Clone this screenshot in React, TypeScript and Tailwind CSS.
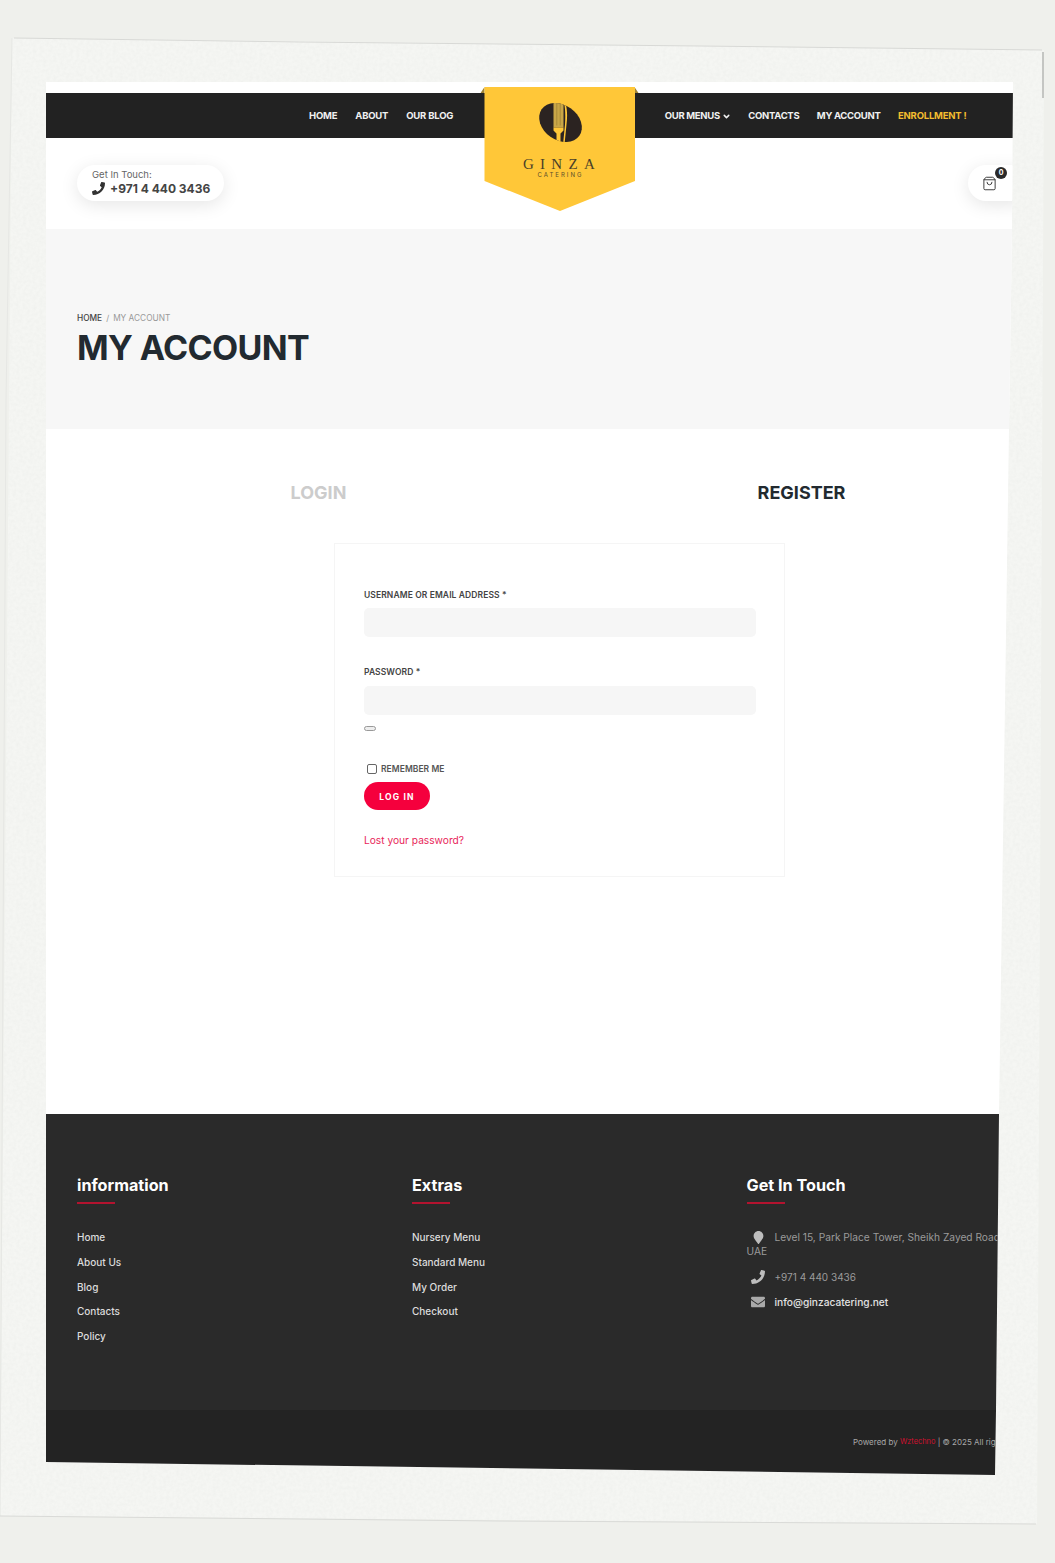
import { ChevronDown, ShoppingBag } from "lucide-react";
import { FaEnvelope, FaMapMarker, FaPhone } from "react-icons/fa";

const leftNav = ["HOME", "ABOUT", "OUR BLOG"];
const infoLinks = ["Home", "About Us", "Blog", "Contacts", "Policy"];
const extraLinks = ["Nursery Menu", "Standard Menu", "My Order", "Checkout"];

function Paper() {
  return (
    <svg className="absolute inset-0" width="1055" height="1563" aria-hidden="true">
      <defs>
        <filter id="grain" x="0" y="0" width="100%" height="100%">
          <feTurbulence type="fractalNoise" baseFrequency="0.3" numOctaves="3" seed="4" />
          <feColorMatrix values="0 0 0 0 0.6  0 0 0 0 0.62  0 0 0 0 0.6  0 0 0 0.2 -0.06" />
        </filter>
        <clipPath id="sheet">
          <path d="M12 38 L1044 50 L1037 1524 L0 1516 Z" />
        </clipPath>
      </defs>
      <path d="M12 38 L1044 50 L1037 1524 L0 1516 Z" fill="#f5f6f3" />
      <rect width="1055" height="1563" filter="url(#grain)" clipPath="url(#sheet)" />
      <path d="M14 38 L300 42 L700 46 L1042 50" fill="none" stroke="#d8d9d6" strokeWidth="1" />
      <path d="M12 38 L6 400 L0 1516" fill="none" stroke="#e6e7e4" strokeWidth="1" />
      <path d="M0 1516 L500 1521 L1036 1524" fill="none" stroke="#d9dad7" strokeWidth="1" />
      <path d="M1043 52 L1043 98" fill="none" stroke="#b5b6b3" strokeWidth="1.5" />
    </svg>
  );
}

function LogoBanner() {
  return (
    <div className="absolute left-1/2 top-[5px] h-[124px] w-[159px] -translate-x-1/2">
      <svg className="absolute inset-0" width="159" height="124" viewBox="0 0 159 124">
        <defs>
          <clipPath id="bean">
            <ellipse cx="0" cy="0" rx="23" ry="17.5" transform="rotate(35)" />
          </clipPath>
        </defs>
        <path d="M0 6 L4 0 L4 6 Z M158 6 L154 0 L154 6 Z" fill="#a08437" />
        <path d="M4 0 H154.5 V94 L79.5 124 L4 94 Z" fill="#ffc738" />
        <g transform="translate(80 35.5)">
          <ellipse cx="0" cy="0" rx="23" ry="17.5" transform="rotate(35)" fill="#2b2321" />
          <g clipPath="url(#bean)">
            {/* fork: gold band with faint tines, then the stem */}
            <rect x="-7" y="-22" width="10" height="27" fill="#c9a647" />
            <rect x="-4.2" y="-22" width="1" height="25" fill="#a88a3a" />
            <rect x="-0.8" y="-22" width="1" height="25" fill="#a88a3a" />
            <path d="M-7 5 H3 V8 L0 11 V22 H-4 V11 L-7 8 Z" fill="#ffc738" />
            {/* knife edge */}
            <path d="M4 -22 C7 -15 7 -6 6 2 L4 22 H2.5 L4.5 2 C5 -6 5 -15 3 -22 Z" fill="#ffc738" />
          </g>
        </g>
      </svg>
      <div className="absolute inset-x-0 top-[69px] pl-[5px] text-center font-['Liberation_Serif',serif] text-[15px] leading-[16px] tracking-[0.42em] text-[#4a3f28]">
        GINZA
      </div>
      <div className="absolute inset-x-0 top-[84px] pl-[2px] text-center font-['Inter',sans-serif] text-[6px] leading-[7px] tracking-[0.34em] text-[#5c4e2c]">
        CATERING
      </div>
    </div>
  );
}

function FooterHeading({ title }: { title: string }) {
  return (
    <div>
      <h3 className="text-[16.2px] font-bold leading-[22px] text-white">{title}</h3>
      <div className="mt-[6px] h-[2px] w-[38px] bg-[#b3132f]" />
    </div>
  );
}

function FooterLinks({ links }: { links: string[] }) {
  return (
    <ul className="mt-[21px] flex flex-col">
      {links.map((link) => (
        <li key={link} className="text-[10px] font-medium leading-[24.75px] text-[#dcdcdc]">
          {link}
        </li>
      ))}
    </ul>
  );
}

export default function App() {
  return (
    <div className="relative h-[1563px] w-[1055px] overflow-hidden bg-[#eff0ec] font-['Inter',sans-serif]">
      <Paper />

      <div className="relative ml-[46px] pt-[82px]">
        <div className="relative w-[1027px] bg-white [clip-path:polygon(0_0,967px_0,966px_147px,963px_347px,953px_1032px,950px_1328px,949px_1393px,0_1380px)]">
          <div className="h-[11px]" />

          <nav className="flex h-[45px] items-center bg-[#222222] pl-[263px] pt-[1px] text-[9.5px] font-bold text-[#f1f1f1]">
            <div className="flex gap-[18px] tracking-[-0.2px]">
              {leftNav.map((item) => (
                <a key={item}>{item}</a>
              ))}
            </div>
            <div className="ml-[211.5px] flex gap-[17.5px] tracking-[-0.3px]">
              <a className="flex items-center gap-[2px]">
                OUR MENUS <ChevronDown size={9} strokeWidth={4} />
              </a>
              <a>CONTACTS</a>
              <a>MY ACCOUNT</a>
              <a className="tracking-[-0.2px] text-[#f4bd2f]">ENROLLMENT !</a>
            </div>
          </nav>

          <LogoBanner />

          <header className="flex h-[91px] items-start justify-between pl-[31px] pr-[45px] pt-[27px]">
            <div className="flex h-[36px] w-[147px] flex-col justify-center rounded-full bg-white pl-[15px] shadow-[0_4px_18px_rgba(0,0,0,0.1)]">
              <span className="mt-[-2px] text-[9.5px] leading-[12px] text-[#666666]">Get In Touch:</span>
              <span className="flex items-center gap-[5px] text-[12px] font-bold leading-[15px] text-[#444444]">
                <FaPhone size={13} className="text-[#333333]" /> +971 4 440 3436
              </span>
            </div>
            <div className="relative flex h-[36px] w-[60px] items-center rounded-full bg-white pl-[14px] shadow-[0_4px_18px_rgba(0,0,0,0.1)]">
              <ShoppingBag size={15} strokeWidth={1.5} className="text-[#333333]" />
              <span className="absolute left-[27px] top-[2px] flex h-[12px] w-[12px] items-center justify-center rounded-full bg-[#2a2a2a] text-[7px] font-bold text-white">
                0
              </span>
            </div>
          </header>

          <section className="h-[200px] bg-[#f7f7f7] pl-[31px] pt-[83px]">
            <div className="flex items-center gap-[4px] text-[8.3px] leading-[12px]">
              <span className="font-medium text-[#444444]">HOME</span>
              <span className="text-[#999999]">/</span>
              <span className="text-[#999999]">MY ACCOUNT</span>
            </div>
            <h1 className="mt-[2px] text-[34px] font-bold leading-[44px] tracking-[-0.65px] text-[#222a30]">
              MY ACCOUNT
            </h1>
          </section>

          <main className="h-[685px] pt-[52px]">
            <div className="ml-[31px] grid w-[966px] grid-cols-2 text-center text-[18px] font-bold leading-[24px]">
              <span className="text-[#cccccc]">LOGIN</span>
              <span className="text-[#222a30]">REGISTER</span>
            </div>

            <form className="mx-auto mt-[38px] h-[334px] w-[451px] border border-[#f5f5f5] px-[29px] pt-[45px]">
              <label className="block text-[8.5px] font-semibold leading-[12px] tracking-[0.1px] text-[#444444]">
                USERNAME OR EMAIL ADDRESS *
              </label>
              <div className="mt-[7px] h-[29px] w-[392px] rounded-[5px] bg-[#f6f6f6]" />
              <label className="mt-[29px] block text-[8.5px] font-semibold leading-[12px] tracking-[0.1px] text-[#444444]">
                PASSWORD *
              </label>
              <div className="mt-[8px] h-[29px] w-[392px] rounded-[5px] bg-[#f6f6f6]" />
              <div className="mt-[11px] h-[5px] w-[12px] rounded-[3px] border border-[#999999] bg-[#eeeeee]" />
              <div className="mt-[32px] flex items-center gap-[4px] pl-[3px]">
                <span className="h-[10px] w-[10px] rounded-[2px] border border-[#666666] bg-white" />
                <span className="text-[8.5px] font-semibold leading-[12px] tracking-[0.05px] text-[#555555]">
                  REMEMBER ME
                </span>
              </div>
              <button
                type="button"
                className="mt-[7px] block h-[28px] w-[66px] rounded-full bg-[#f5003d] pt-[2px] text-[8.5px] font-bold tracking-[1.2px] text-white"
              >
                LOG IN
              </button>
              <a className="mt-[23px] block text-[10.2px] leading-[14px] text-[#e8265a]">
                Lost your password?
              </a>
            </form>
          </main>

          <footer className="grid h-[296px] grid-cols-[335px_334.5px_1fr] bg-[#2a2a2a] pl-[31px] pt-[60px]">
            <div>
              <FooterHeading title="information" />
              <FooterLinks links={infoLinks} />
            </div>
            <div>
              <FooterHeading title="Extras" />
              <FooterLinks links={extraLinks} />
            </div>
            <div>
              <FooterHeading title="Get In Touch" />
              <div className="mt-[26px] w-[300px] text-[10.2px] leading-[14px] text-[#9b9b9b]">
                <FaMapMarker size={13} className="ml-[5px] mr-[10px] inline align-[-3px] text-[#bdbdbd]" />
                Level 15, Park Place Tower, Sheikh Zayed Road, Dubai, UAE
              </div>
              <div className="mt-[12px] flex items-center text-[10px] leading-[14px] text-[#9b9b9b]">
                <FaPhone size={14} className="ml-[4px] mr-[10px] text-[#bdbdbd]" />
                +971 4 440 3436
              </div>
              <div className="mt-[11px] flex items-center text-[10.2px] font-medium leading-[14px] text-[#e2e2e2]">
                <FaEnvelope size={14} className="ml-[4px] mr-[10px] text-[#a9a9a9]" />
                info@ginzacatering.net
              </div>
            </div>
          </footer>

          <div className="flex h-[65px] items-start whitespace-nowrap bg-[#232323] pl-[807px] pt-[26px] text-[8px] leading-[12px] text-[#a8a8a8]">
            Powered by&nbsp;<span className="text-[7.4px] text-[#d0102f]">Wztechno</span>&nbsp;| © 2025 All rights reserved
          </div>
        </div>
      </div>
    </div>
  );
}
